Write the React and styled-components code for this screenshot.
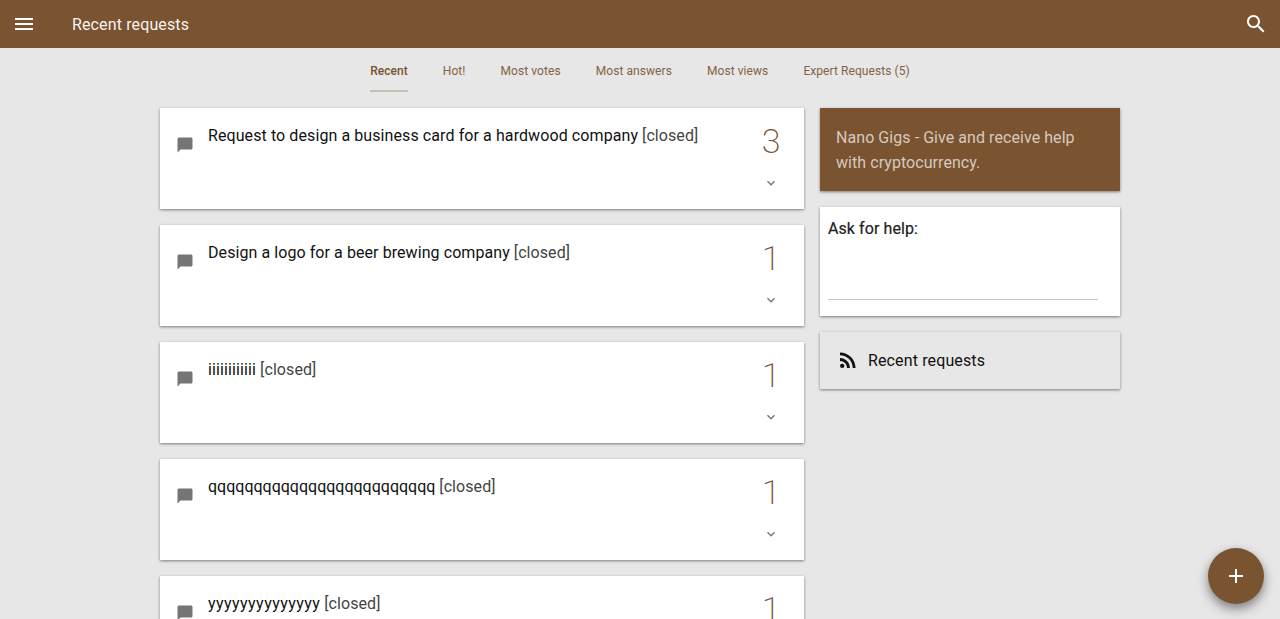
import React from "react";
import styled, { createGlobalStyle } from "styled-components";

const Global = createGlobalStyle`
  html, body { margin: 0; padding: 0; height: 100%; overflow: hidden; }
  body { background: #e7e7e7; font-family: Roboto, "Liberation Sans", sans-serif; }
`;
const BROWN = "#7a5330";
const Page = styled.div`height: 619px; overflow: hidden; position: relative; display: flex; flex-direction: column;`;
const TopBar = styled.header`
  flex: none; height: 48px; background: ${BROWN}; color: #fff; display: flex; align-items: center; padding: 0 12px;
`;
const BarIcon = styled.svg`width: 24px; height: 24px; fill: #fff; flex: none; display: block;`;
const BarTitle = styled.div`flex: 1; margin: 2px 0 0 36px; font-size: 16px; font-weight: 400; line-height: 24px; letter-spacing: .13px; color: rgba(255,255,255,.95);`;
const Tabs = styled.nav`flex: none; height: 60px; display: flex; justify-content: center; gap: 35px;`;
const Tab = styled.a`
  box-sizing: border-box; height: 44px; line-height: 46px; font-size: 12px; color: ${BROWN};
  letter-spacing: ${p => (p.$active ? ".03px" : ".07px")};
  font-weight: ${p => (p.$active ? 500 : 400)};
  opacity: ${p => (p.$active ? 1 : .9)};
  border-bottom: 2px solid ${p => (p.$active ? "#c8bfb3" : "transparent")};
`;
const Columns = styled.main`width: 960px; margin: 0 auto; display: flex; gap: 16px; align-items: flex-start;`;
const Feed = styled.section`width: 644px; flex: none; display: flex; flex-direction: column; gap: 16px;`;
const Card = styled.article`
  box-sizing: border-box; height: 101.1px; flex: none; background: #fff; display: flex; padding: 16px;
  box-shadow: 0 1px 3px rgba(0,0,0,.3), 0 1px 2px rgba(0,0,0,.2);
`;
const MsgIcon = styled.svg`width: 18px; height: 18px; fill: #757575; flex: none; margin: 11.5px 14px 0 0; display: block;`;
const Title = styled.h3`flex: 1; margin: 0; font-size: 16px; font-weight: 400; line-height: 24px; color: #111;`;
const TitleText = styled.span`letter-spacing: ${p => p.$track}px;`;
const Closed = styled.span`color: #444; letter-spacing: .08px;`;
const Side = styled.div`width: 48px; margin: -5px -7px 0 0; flex: none; display: flex; flex-direction: column; align-items: center;`;
const Count = styled.div`font-size: 34px; font-weight: 200; line-height: 44px; color: #735030;`;
const Chevron = styled.svg`width: 16px; height: 16px; fill: #757575; margin-top: 12px; display: block;`;
const Aside = styled.aside`width: 300px; flex: none; display: flex; flex-direction: column; gap: 16px;`;
const Panel = styled.div`box-shadow: 0 1px 3px rgba(0,0,0,.3), 0 1px 2px rgba(0,0,0,.2);`;
const Promo = styled(Panel)`
  background: ${BROWN}; color: rgba(255,255,255,.7); font-size: 16px; line-height: 25px; letter-spacing: .06px; padding: 17px 16px 16px; height: 83.4px; box-sizing: border-box;
`;
const Ask = styled(Panel)`background: #fff; padding: 9px 8px 8px; height: 108.3px; box-sizing: border-box;`;
const AskLabel = styled.label`display: block; font-size: 16px; line-height: 26px; letter-spacing: .08px; color: #222; font-weight: 400; -webkit-text-stroke: .2px #222;`;
const AskLine = styled.div`margin-top: 56.5px; width: 270px; height: 1px; background: #c8c8c8;`;
const Link = styled(Panel)`
  background: #e7e7e7; height: 57.3px; box-sizing: border-box; display: flex; align-items: center; padding: 0 16px;
  font-size: 16px; letter-spacing: .13px; color: #111; gap: 8px;
`;
const RssIcon = styled.svg`width: 24px; height: 24px; fill: #111; flex: none; display: block;`;
const Fab = styled.button`
  position: absolute; right: 16px; bottom: 15px; width: 56px; height: 56px; border-radius: 50%; border: 0; padding: 0;
  background: ${BROWN}; display: flex; align-items: center; justify-content: center;
  box-shadow: 0 4px 8px rgba(0,0,0,.3), 0 6px 14px rgba(0,0,0,.2);
`;

const Msg = () => <MsgIcon viewBox="0 0 24 24"><path d="M20 2H4c-1.1 0-1.99.9-1.99 2L2 22l4-4h14c1.1 0 2-.9 2-2V4c0-1.1-.9-2-2-2z"/></MsgIcon>;
const items = [
  ["Request to design a business card for a hardwood company", 3, 0.09],
  ["Design a logo for a beer brewing company", 1, 0.075],
  ["iiiiiiiiiiii", 1, 0.12],
  ["qqqqqqqqqqqqqqqqqqqqqqqqq", 1, 0],
  ["yyyyyyyyyyyyyy", 1, 0.45],
];
const tabs = ["Recent", "Hot!", "Most votes", "Most answers", "Most views", "Expert Requests (5)"];

export default function App() {
  return (
    <Page>
      <Global />
      <TopBar>
        <BarIcon viewBox="0 0 24 24"><path d="M3 18h18v-2H3v2zm0-5h18v-2H3v2zm0-7v2h18V6H3z"/></BarIcon>
        <BarTitle>Recent requests</BarTitle>
        <BarIcon viewBox="0 0 24 24"><path d="M15.5 14h-.79l-.28-.27C15.41 12.59 16 11.11 16 9.5 16 5.91 13.09 3 9.5 3S3 5.91 3 9.5 5.91 16 9.5 16c1.61 0 3.09-.59 4.23-1.57l.27.28v.79l5 4.99L20.49 19l-4.99-5zm-6 0C7.01 14 5 11.99 5 9.5S7.01 5 9.5 5 14 7.01 14 9.5 11.99 14 9.5 14z"/></BarIcon>
      </TopBar>
      <Tabs>
        {tabs.map((t, i) => <Tab key={t} $active={i === 0}>{t}</Tab>)}
      </Tabs>
      <Columns>
        <Feed>
          {items.map(([t, n, track], i) => (
            <Card key={i}>
              <Msg />
              <Title><TitleText $track={track}>{t}</TitleText> <Closed>[closed]</Closed></Title>
              <Side>
                <Count>{n}</Count>
                <Chevron viewBox="0 0 24 24"><path d="M16.59 8.59L12 13.17 7.41 8.59 6 10l6 6 6-6z"/></Chevron>
              </Side>
            </Card>
          ))}
        </Feed>
        <Aside>
          <Promo>Nano Gigs - Give and receive help with cryptocurrency.</Promo>
          <Ask>
            <AskLabel>Ask for help:</AskLabel>
            <AskLine />
          </Ask>
          <Link>
            <RssIcon viewBox="0 0 24 24"><circle cx="6.18" cy="17.82" r="2.18"/><path d="M4 4.44v2.83c7.03 0 12.73 5.7 12.73 12.73h2.83c0-8.59-6.97-15.56-15.56-15.56zm0 5.66v2.83c3.9 0 7.07 3.17 7.07 7.07h2.83c0-5.47-4.43-9.9-9.9-9.9z"/></RssIcon>
            Recent requests
          </Link>
        </Aside>
      </Columns>
      <Fab aria-label="add">
        <BarIcon viewBox="0 0 24 24"><path d="M19 13h-6v6h-2v-6H5v-2h6V5h2v6h6v2z"/></BarIcon>
      </Fab>
    </Page>
  );
}
